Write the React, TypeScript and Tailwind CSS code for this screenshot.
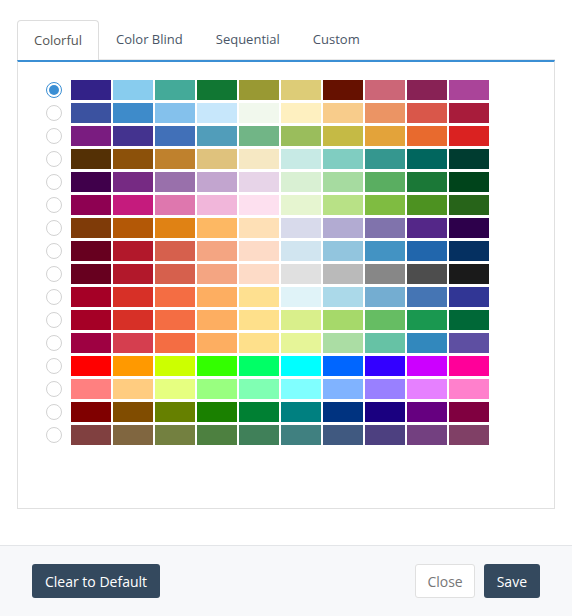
import React from "react";

const palettes: string[][] = [
  ["#332288", "#88ccee", "#44aa99", "#117733", "#999933", "#ddcc77", "#661100", "#cc6677", "#882255", "#aa4499"],
  ["#3b52a0", "#3e8bca", "#84c1ec", "#c7e7fb", "#f1f8ed", "#fef0c0", "#f8cc8b", "#eb9464", "#d9574a", "#a81c3b"],
  ["#7a1c80", "#44338f", "#4170b8", "#519dba", "#71b586", "#9abd5c", "#c5ba45", "#e3a33a", "#e86a2e", "#da2221"],
  ["#543005", "#8c510a", "#bf812d", "#dfc27d", "#f6e8c3", "#c7eae5", "#80cdc1", "#35978f", "#01665e", "#003c30"],
  ["#40004b", "#762a83", "#9970ab", "#c2a5cf", "#e7d4e8", "#d9f0d3", "#a6dba0", "#5aae61", "#1b7837", "#00441b"],
  ["#8e0152", "#c51b7d", "#de77ae", "#f1b6da", "#fde0ef", "#e6f5d0", "#b8e186", "#7fbc41", "#4d9221", "#276419"],
  ["#7f3b08", "#b35806", "#e08214", "#fdb863", "#fee0b6", "#d8daeb", "#b2abd2", "#8073ac", "#542788", "#2d004b"],
  ["#67001f", "#b2182b", "#d6604d", "#f4a582", "#fddbc7", "#d1e5f0", "#92c5de", "#4393c3", "#2166ac", "#053061"],
  ["#67001f", "#b2182b", "#d6604d", "#f4a582", "#fddbc7", "#e0e0e0", "#bababa", "#878787", "#4d4d4d", "#1a1a1a"],
  ["#a50026", "#d73027", "#f46d43", "#fdae61", "#fee090", "#e0f3f8", "#abd9e9", "#74add1", "#4575b4", "#313695"],
  ["#a50026", "#d73027", "#f46d43", "#fdae61", "#fee08b", "#d9ef8b", "#a6d96a", "#66bd63", "#1a9850", "#006837"],
  ["#9e0142", "#d53e4f", "#f46d43", "#fdae61", "#fee08b", "#e6f598", "#abdda4", "#66c2a5", "#3288bd", "#5e4fa2"],
  ["#ff0000", "#ff9900", "#ccff00", "#33ff00", "#00ff66", "#00ffff", "#0066ff", "#3300ff", "#cc00ff", "#ff0099"],
  ["#ff8080", "#ffcc80", "#e6ff80", "#99ff80", "#80ffb3", "#80ffff", "#80b3ff", "#9980ff", "#e680ff", "#ff80cc"],
  ["#800000", "#804c00", "#668000", "#1a8000", "#008033", "#008080", "#003380", "#1a0080", "#660080", "#800040"],
  ["#804040", "#806640", "#738040", "#4d8040", "#408059", "#408080", "#405980", "#4d4080", "#734080", "#804066"],
];

const tabs = ["Colorful", "Color Blind", "Sequential", "Custom"];

function Radio({ checked }: { checked: boolean }) {
  if (checked) {
    return (
      <div className="w-4 h-4 rounded-full border-[1.5px] border-[#3b8fd4] bg-white flex items-center justify-center shrink-0">
        <div className="w-[10px] h-[10px] rounded-full bg-[#3b8fd4]" />
      </div>
    );
  }
  return <div className="w-4 h-4 rounded-full border-[1.5px] border-[#d2d2d2] bg-white shrink-0" />;
}

export default function App() {
  return (
    <div className="w-[572px] h-[616px] flex flex-col bg-white font-['Open_Sans',sans-serif]">
      <div className="flex-1 px-[17px] pt-5 pb-9 flex flex-col">
        <div className="flex gap-px h-10 border-b border-[#e8e8e8]">
          {tabs.map((t, i) =>
            i === 0 ? (
              <div
                key={t}
                className="h-10 -mb-px px-4 flex items-center border border-b-0 border-[#dddddd] rounded-t-[4px] bg-white text-[13px] text-[#555555]"
              >
                {t}
              </div>
            ) : (
              <div key={t} className="h-10 px-4 flex items-center text-[13px] text-[#4a5667]">
                {t}
              </div>
            )
          )}
        </div>
        <div className="flex-1 border-t-2 border-t-[#3b8fd4] border-x border-b border-x-[#e0e0e0] border-b-[#e0e0e0] pl-[28px] pt-[18px]">
          <div className="flex flex-col gap-[3px]">
            {palettes.map((row, ri) => (
              <div key={ri} className="flex items-center gap-[9px]">
                <Radio checked={ri === 0} />
                <div className="flex gap-[2px]">
                  {row.map((c, ci) => (
                    <div key={ci} className="w-10 h-5" style={{ backgroundColor: c }} />
                  ))}
                </div>
              </div>
            ))}
          </div>
        </div>
      </div>
      <div className="h-[71px] border-t border-[#e3e5e8] bg-[#f7f8fa] flex items-center justify-between px-8">
        <button className="h-[34px] px-[13px] rounded-[3px] bg-[#34495e] text-white text-[14px]">
          Clear to Default
        </button>
        <div className="flex gap-[9px]">
          <button className="h-[34px] px-[11px] rounded-[3px] border border-[#e0e0e0] bg-white text-[#777777] text-[14px]">
            Close
          </button>
          <button className="h-[34px] px-[13px] rounded-[3px] bg-[#34495e] text-white text-[14px]">
            Save
          </button>
        </div>
      </div>
    </div>
  );
}
